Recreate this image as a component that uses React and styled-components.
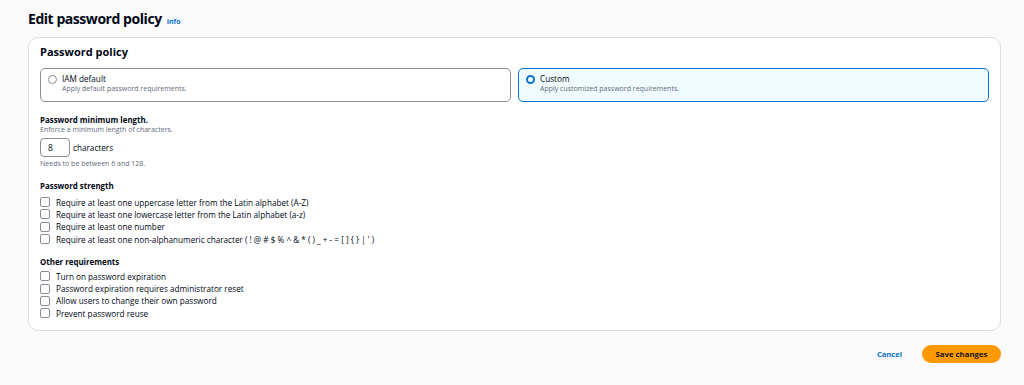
import React from "react";
import styled, { createGlobalStyle } from "styled-components";

const Global = createGlobalStyle`
  html, body { margin: 0; padding: 0; background: #fafafa; }
  body { font-family: "Open Sans", "Noto Sans", sans-serif; color: #000716; }
  * { box-sizing: border-box; }
`;

const Page = styled.div`
  padding: 9px 23px 0 28px;
  width: 1024px;
  height: 385px;
`;

const TitleRow = styled.div`
  display: flex;
  align-items: baseline;
  gap: 5px;
  height: 28px;
`;

const Title = styled.h1`
  margin: 0;
  font-size: 14px;
  font-weight: 700;
  line-height: 20px;
  letter-spacing: -0.45px;
`;

const InfoLink = styled.span`
  font-size: 7px;
  font-weight: 700;
  color: #0972d3;
`;

const Card = styled.section`
  background: #fff;
  border: 1px solid #dedee3;
  border-radius: 10px;
  padding: 6px 11px 11px 11px;
`;

const CardTitle = styled.h2`
  margin: 0;
  font-size: 11px;
  font-weight: 700;
  line-height: 16px;
`;

const Tiles = styled.div`
  display: grid;
  grid-template-columns: 1fr 1fr;
  gap: 7px;
  margin-top: 8px;
`;

const Tile = styled.div`
  height: 34px;
  border-radius: 5px;
  border: ${p => (p.$selected ? "1.5px solid #0972d3" : "1px solid #8c8c94")};
  background: ${p => (p.$selected ? "#f0fbff" : "#fff")};
  display: flex;
  align-items: flex-start;
  gap: 5px;
  padding: 5px 8px 0 7px;
`;

const Radio = styled.span`
  flex: none;
  width: 9px;
  height: 9px;
  margin-top: 0.5px;
  border-radius: 50%;
  background: #fff;
  border: ${p => (p.$checked ? "2.5px solid #0972d3" : "1px solid #8c8c94")};
`;

const TileText = styled.div`
  display: flex;
  flex-direction: column;
`;

const Label = styled.span`
  font-size: ${p => (p.$bold ? "7.9px" : "8.2px")};
  line-height: 10px;
  font-weight: ${p => (p.$bold ? 700 : 400)};
`;

const Desc = styled.span`
  font-size: 7px;
  line-height: 10px;
  color: #5f6b7a;
`;

const Section = styled.div`
  display: flex;
  flex-direction: column;
  margin-top: ${p => p.$mt}px;
`;

const InputRow = styled.div`
  display: flex;
  align-items: center;
  gap: 3px;
  margin-top: 3px;
  margin-bottom: 2px;
`;

const NumberBox = styled.div`
  width: 30px;
  height: 19px;
  border: 1px solid #8c8c94;
  border-radius: 4px;
  font-size: 8.5px;
  display: flex;
  align-items: center;
  padding-left: 7px;
  background: #fff;
`;

const CheckList = styled.div`
  display: flex;
  flex-direction: column;
  margin-top: ${p => p.$mt}px;
`;

const CheckRow = styled.label`
  display: flex;
  align-items: center;
  gap: 6px;
  height: 12.3px;
  font-size: 8.2px;
`;

const Box = styled.span`
  flex: none;
  width: 10px;
  height: 10px;
  border: 1px solid #8c8c94;
  border-radius: 2px;
  background: #fff;
`;

const Actions = styled.div`
  display: flex;
  justify-content: flex-end;
  align-items: center;
  gap: 20px;
  margin-top: 14px;
`;

const LinkButton = styled.button`
  border: none;
  background: none;
  padding: 0;
  font-family: inherit;
  font-size: 7.6px;
  font-weight: 700;
  color: #0972d3;
`;

const PrimaryButton = styled.button`
  border: none;
  background: #ff9900;
  border-radius: 10px;
  height: 18px;
  width: 79px;
  font-family: inherit;
  font-size: 7.8px;
  font-weight: 700;
  color: #0f141a;
`;

const strength = [
  "Require at least one uppercase letter from the Latin alphabet (A-Z)",
  "Require at least one lowercase letter from the Latin alphabet (a-z)",
  "Require at least one number",
  "Require at least one non-alphanumeric character ( ! @ # $ % ^ & * ( ) _ + - = [ ] { } | ' )",
];

const other = [
  "Turn on password expiration",
  "Password expiration requires administrator reset",
  "Allow users to change their own password",
  "Prevent password reuse",
];

export default function App() {
  return (
    <Page>
      <Global />
      <TitleRow>
        <Title>Edit password policy</Title>
        <InfoLink>Info</InfoLink>
      </TitleRow>
      <Card>
        <CardTitle>Password policy</CardTitle>
        <Tiles>
          <Tile>
            <Radio />
            <TileText>
              <Label>IAM default</Label>
              <Desc>Apply default password requirements.</Desc>
            </TileText>
          </Tile>
          <Tile $selected>
            <Radio $checked />
            <TileText>
              <Label>Custom</Label>
              <Desc>Apply customized password requirements.</Desc>
            </TileText>
          </Tile>
        </Tiles>

        <Section $mt={13}>
          <Label $bold>Password minimum length.</Label>
          <Desc>Enforce a minimum length of characters.</Desc>
          <InputRow>
            <NumberBox>8</NumberBox>
            <Label>characters</Label>
          </InputRow>
          <Desc>Needs to be between 6 and 128.</Desc>
        </Section>

        <Section $mt={12}>
          <Label $bold>Password strength</Label>
          <CheckList $mt={5}>
            {strength.map(t => (
              <CheckRow key={t}>
                <Box />
                {t}
              </CheckRow>
            ))}
          </CheckList>
        </Section>

        <Section $mt={12}>
          <Label $bold>Other requirements</Label>
          <CheckList $mt={3}>
            {other.map(t => (
              <CheckRow key={t}>
                <Box />
                {t}
              </CheckRow>
            ))}
          </CheckList>
        </Section>
      </Card>
      <Actions>
        <LinkButton>Cancel</LinkButton>
        <PrimaryButton>Save changes</PrimaryButton>
      </Actions>
    </Page>
  );
}
